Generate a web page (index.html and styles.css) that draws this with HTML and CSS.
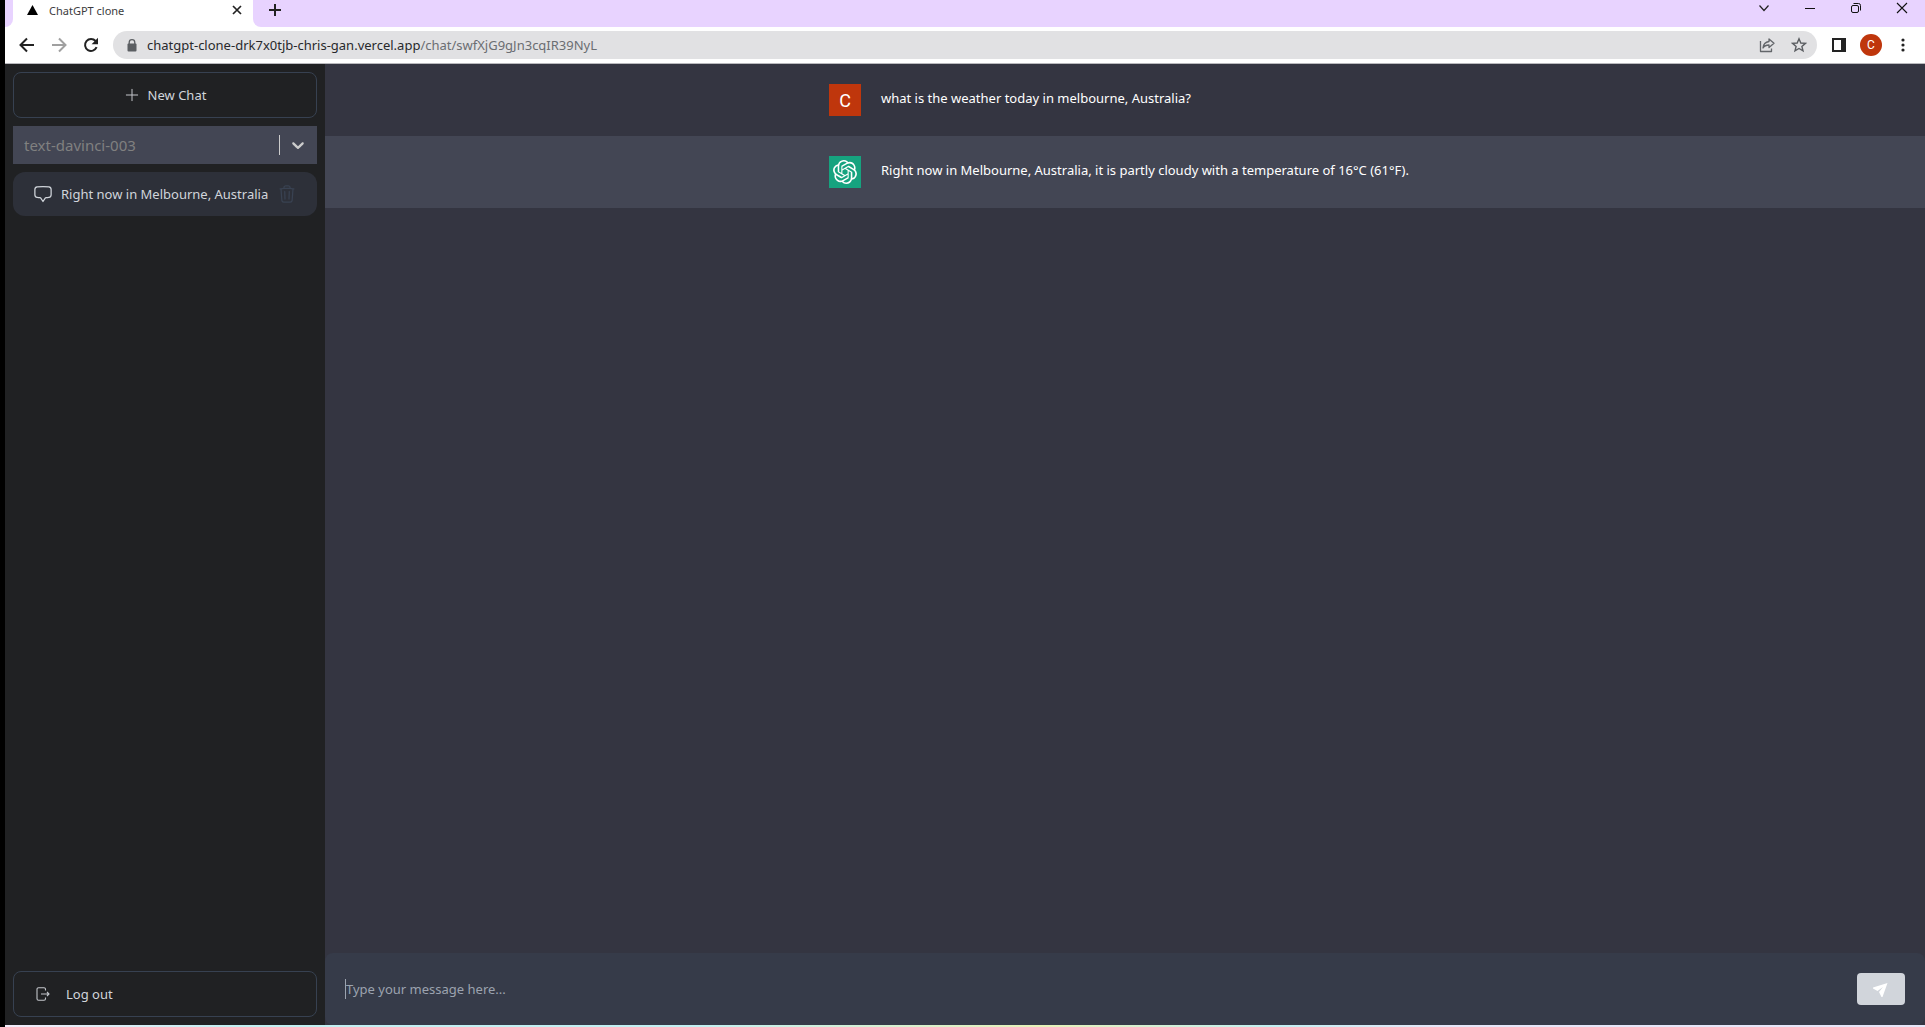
FILE: index.html
```html
<!DOCTYPE html>
<html lang="en">
<head>
<meta charset="utf-8">
<meta name="viewport" content="width=device-width, initial-scale=1">
<title>ChatGPT clone</title>
<link rel="stylesheet" href="styles.css">
</head>
<body>
<div class="window">
  <header class="browser">
    <div class="tabstrip">
      <div class="tab-edge"></div>
      <div class="tab">
        <svg class="favicon" width="11" height="10" viewBox="0 0 11 10"><path d="M5.500 0 11 10H0z" fill="#000"/></svg>
        <span class="tab-title">ChatGPT clone</span>
        <button class="icon-btn" aria-label="Close tab"><svg width="10" height="10" viewBox="0 0 10 10"><path d="M1 1l8 8M9 1l-8 8" stroke="#222" stroke-width="1.700"/></svg></button>
      </div>
      <div class="tab-rest">
        <button class="icon-btn" aria-label="New tab"><svg width="12" height="12" viewBox="0 0 12 12"><path d="M6 0v12M0 6h12" stroke="#222" stroke-width="2"/></svg></button>
        <div class="window-controls">
          <button class="icon-btn" aria-label="Search tabs"><svg width="12" height="12" viewBox="0 0 12 12"><path d="M1.500 3.500 6 8.500l4.500-5" fill="none" stroke="#222" stroke-width="1.200"/></svg></button>
          <button class="icon-btn" aria-label="Minimize"><svg width="12" height="12" viewBox="0 0 12 12"><path d="M1 6.500h10" stroke="#111" stroke-width="1"/></svg></button>
          <button class="icon-btn" aria-label="Restore"><svg width="12" height="12" viewBox="0 0 12 12"><g fill="none" stroke="#111"><rect x="1.500" y="3.500" width="7" height="7" rx="1.500"/><path d="M3.500 1.500h5a2 2 0 0 1 2 2v5"/></g></svg></button>
          <button class="icon-btn" aria-label="Close"><svg width="12" height="12" viewBox="0 0 12 12"><path d="M1 1l10 10M11 1 1 11" stroke="#111" stroke-width="1.100"/></svg></button>
        </div>
      </div>
    </div>
    <div class="toolbar">
      <div class="nav">
        <button class="icon-btn" aria-label="Back"><svg width="16" height="16" viewBox="0 0 16 16"><path d="M15 8H2M8 1.500 1.500 8 8 14.500" fill="none" stroke="#222" stroke-width="2"/></svg></button>
        <button class="icon-btn" aria-label="Forward"><svg width="16" height="16" viewBox="0 0 16 16"><path d="M1 8h13M8 1.500 14.500 8 8 14.500" fill="none" stroke="#a0a0a0" stroke-width="2"/></svg></button>
        <button class="icon-btn" aria-label="Reload"><svg width="16" height="16" viewBox="0 0 16 16"><path d="M13.600 10.200A6 6 0 1 1 12.600 4" fill="none" stroke="#222" stroke-width="2"/><path d="M15 .8v6.400H8.600z" fill="#222"/></svg></button>
      </div>
      <div class="address">
        <svg width="10" height="13" viewBox="0 0 10 13"><path d="M2.200 5V3.500a2.800 2.800 0 0 1 5.600 0V5" fill="none" stroke="#5b5e62" stroke-width="1.300"/><rect x=".5" y="4.500" width="9" height="8" rx="1" fill="#5b5e62"/></svg>
        <p class="url"><span class="url-host">chatgpt-clone-drk7x0tjb-chris-gan.vercel.app</span>/chat/swfXjG9gJn3cqIR39NyL</p>
        <div class="address-actions">
          <button class="icon-btn" aria-label="Share"><svg width="16" height="16" viewBox="0 0 16 16"><g fill="none" stroke="#63666a" stroke-width="1.300" stroke-linejoin="round"><path d="M1.500 4v10.500h11v-3"/><path d="M10 2l5 4.300-5 4.200V8c-3 0-4.800.9-6 3 .3-3.500 2.500-6 6-6.500z"/></g></svg></button>
          <button class="icon-btn" aria-label="Bookmark"><svg width="16" height="16" viewBox="0 0 16 16"><path d="M8 1.800l1.800 4.200 4.600.4-3.500 3 1.100 4.500L8 11.500l-4 2.400 1.100-4.500-3.500-3 4.600-.4z" fill="none" stroke="#5b5e62" stroke-width="1.400"/></svg></button>
        </div>
      </div>
      <button class="icon-btn" aria-label="Side panel"><svg width="14" height="14" viewBox="0 0 14 14"><path fill="#222" fill-rule="evenodd" d="M0 0h14v14H0zM2 2v10h7V2z"/></svg></button>
      <button class="profile" aria-label="Profile">C</button>
      <button class="icon-btn menu" aria-label="Menu"><svg width="4" height="14" viewBox="0 0 4 14"><g fill="#222"><circle cx="2" cy="2" r="1.600"/><circle cx="2" cy="7" r="1.600"/><circle cx="2" cy="12" r="1.600"/></g></svg></button>
    </div>
  </header>

  <div class="app">
    <aside class="sidebar">
      <button class="outline-btn new-chat">
        <svg width="16" height="16" viewBox="0 0 24 24"><path d="M12 3.500v17M3.500 12h17" stroke="#c3c6cb" stroke-width="1.500" stroke-linecap="round"/></svg>
        New Chat
      </button>
      <div class="model">
        <select class="model-select" aria-label="Model"><option>text-davinci-003</option></select>
        <span class="model-arrow"><svg width="20" height="20" viewBox="0 0 20 20"><path d="M4.516 7.548c.436-.446 1.043-.481 1.576 0L10 11.295l3.908-3.747c.533-.481 1.141-.446 1.574 0 .436.445.408 1.197 0 1.615-.406.418-4.695 4.502-4.695 4.502a1.095 1.095 0 0 1-1.576 0S4.924 9.581 4.516 9.163s-.436-1.170 0-1.615z" fill="#ccc"/></svg></span>
      </div>
      <div class="chat-row">
        <a class="chat-link" href="#chat">
          <svg class="chat-icon" width="20" height="20" viewBox="0 0 24 24"><path fill="none" stroke="#d1d5db" stroke-width="1.500" stroke-linejoin="round" d="M2.250 12.760c0 1.600 1.123 2.994 2.707 3.227 1.068.157 2.148.279 3.238.364.466.037.893.281 1.153.671L12 21l2.652-3.978c.260-.390.687-.634 1.153-.670 1.090-.086 2.170-.208 3.238-.365 1.584-.233 2.707-1.626 2.707-3.228V6.741c0-1.602-1.123-2.995-2.707-3.228A48.394 48.394 0 0 0 12 3c-2.392 0-4.744.175-7.043.513C3.373 3.746 2.250 5.140 2.250 6.741v6.018z"/></svg>
          <span class="chat-title">Right now in Melbourne, Australia</span>
        </a>
        <button class="icon-btn" aria-label="Delete chat"><svg width="20" height="20" viewBox="0 0 24 24"><path fill="none" stroke="#394252" stroke-width="1.500" stroke-linecap="round" stroke-linejoin="round" d="M14.740 9l-.346 9m-4.788 0L9.260 9m9.968-3.210c.342.052.682.107 1.022.166m-1.022-.165L18.160 19.673a2.250 2.250 0 0 1-2.244 2.077H8.084a2.250 2.250 0 0 1-2.244-2.077L4.772 5.790m14.456 0a48.108 48.108 0 0 0-3.478-.397m-12 .562c.340-.059.680-.114 1.022-.165m0 0a48.110 48.110 0 0 1 3.478-.397m7.500 0v-.916c0-1.180-.910-2.164-2.090-2.201a51.964 51.964 0 0 0-3.320 0c-1.180.037-2.090 1.022-2.090 2.201v.916m7.500 0a48.667 48.667 0 0 0-7.500 0"/></svg></button>
      </div>
      <button class="outline-btn logout">
        <svg width="14" height="14" viewBox="0 0 14 14"><path d="M9.500 3.500V2.200A1.500 1.500 0 0 0 8 .7H2.500A1.500 1.500 0 0 0 1 2.200v9.600a1.500 1.500 0 0 0 1.500 1.500H8a1.500 1.500 0 0 0 1.500-1.500v-1.300M5 7h8M11 5l2 2-2 2" fill="none" stroke="#c3c6cb" stroke-width="1.100"/></svg>
        Log out
      </button>
    </aside>

    <main class="main">
      <section class="thread">
        <article class="message">
          <div class="message-inner">
            <span class="avatar avatar-user">C</span>
            <p>what is the weather today in melbourne, Australia?</p>
          </div>
        </article>
        <article class="message message-bot">
          <div class="message-inner">
            <span class="avatar avatar-bot"><svg width="24" height="24" viewBox="0 0 24 24"><path fill="#fff" d="M22.282 9.821a5.985 5.985 0 0 0-.516-4.910 6.046 6.046 0 0 0-6.510-2.900A6.065 6.065 0 0 0 4.981 4.180a5.985 5.985 0 0 0-3.998 2.900 6.046 6.046 0 0 0 .743 7.097 5.980 5.980 0 0 0 .510 4.911 6.051 6.051 0 0 0 6.515 2.900A5.985 5.985 0 0 0 13.260 24a6.056 6.056 0 0 0 5.772-4.206 5.990 5.990 0 0 0 3.997-2.900 6.056 6.056 0 0 0-.747-7.073zM13.260 22.430a4.476 4.476 0 0 1-2.876-1.040l.141-.081 4.779-2.758a.795.795 0 0 0 .392-.681v-6.737l2.020 1.168a.071.071 0 0 1 .038.052v5.583a4.504 4.504 0 0 1-4.494 4.494zM3.600 18.304a4.470 4.470 0 0 1-.535-3.014l.142.085 4.783 2.759a.771.771 0 0 0 .780 0l5.843-3.369v2.332a.080.080 0 0 1-.033.062L9.740 19.950a4.500 4.500 0 0 1-6.140-1.646zM2.340 7.896a4.485 4.485 0 0 1 2.366-1.973V11.600a.766.766 0 0 0 .388.676l5.815 3.355-2.020 1.168a.076.076 0 0 1-.071 0l-4.830-2.786A4.504 4.504 0 0 1 2.340 7.872zm16.597 3.855l-5.833-3.387L15.119 7.200a.076.076 0 0 1 .071 0l4.830 2.791a4.494 4.494 0 0 1-.676 8.105v-5.678a.790.790 0 0 0-.407-.667zm2.010-3.023l-.141-.085-4.774-2.782a.776.776 0 0 0-.785 0L9.409 9.230V6.897a.066.066 0 0 1 .028-.061l4.830-2.787a4.500 4.500 0 0 1 6.680 4.660zm-12.640 4.135l-2.020-1.164a.080.080 0 0 1-.038-.057V6.075a4.500 4.500 0 0 1 7.375-3.453l-.142.080L8.704 5.460a.795.795 0 0 0-.393.681zm1.097-2.365l2.602-1.500 2.607 1.500v2.999l-2.597 1.500-2.607-1.500z"/></svg></span>
            <p>Right now in Melbourne, Australia, it is partly cloudy with a temperature of 16°C (61°F).</p>
          </div>
        </article>
      </section>
      <form class="composer">
        <input class="prompt" type="text" aria-label="Message" placeholder="Type your message here...">
        <button class="send" type="button" aria-label="Send"><svg width="16" height="16" viewBox="0 0 16 16"><path fill="#fff" d="M14.500 2 0 6.500v1L4.500 10 10 6 6 11l2.500 5h1z"/></svg></button>
      </form>
    </main>
  </div>
  <div class="glow"></div>
</div>
</body>
</html>
```
FILE: styles.css
```css
* { box-sizing: border-box; }

body {
  margin: 0;
  background: #000;
  color: #d1d5db;
  font-family: "Noto Sans", "Open Sans", sans-serif;
  font-size: 13px;
}

p { margin: 0; }

button {
  font: inherit;
  color: inherit;
  background: none;
  border: 0;
  padding: 0;
  cursor: pointer;
}

svg { display: block; flex: none; }

.window {
  display: flex;
  flex-direction: column;
  min-height: 100vh;
  padding-left: 5px;
}

/* Browser bar */
.browser { background: #fff; border-bottom: 1px solid #b9b9bd; }

.icon-btn { display: flex; flex: none; align-items: center; justify-content: center; }

.tabstrip { display: flex; height: 27px; background: #fff; }

.tab-edge { width: 8px; background: #e8d3ff; border-bottom-right-radius: 8px; }

.tab {
  display: flex;
  align-items: center;
  width: 240px;
  padding: 0 11px 7px 14px;
  color: #3c3c40;
  font-size: 11px;
}

.tab-title { flex: 1; margin-left: 11px; }

.tab-rest {
  display: flex;
  flex: 1;
  justify-content: space-between;
  padding: 0 17px 8px 16px;
  background: #e8d3ff;
  border-bottom-left-radius: 8px;
}

.window-controls { display: flex; gap: 34px; padding-bottom: 4px; }

.toolbar { display: flex; align-items: center; height: 36px; padding-right: 20px; }

.nav { display: flex; gap: 16px; padding: 0 14px; }

.address {
  display: flex;
  flex: 1;
  align-items: center;
  height: 28px;
  margin-right: 15px;
  padding: 0 10px 0 14px;
  border-radius: 14px;
  background: #e1e1e3;
}

.url { flex: 1; margin-left: 10px; color: #6b6e72; }

.url-host { color: #28292c; }

.address-actions { display: flex; gap: 16px; }

.profile {
  width: 22px;
  height: 22px;
  margin: 0 19px 0 14px;
  border-radius: 50%;
  background: #bf360c;
  color: #fff;
  font: 12px/22px Roboto, sans-serif;
}

/* Application */
.app { display: flex; flex: 1; background: #343541; }

.sidebar {
  display: flex;
  flex: none;
  flex-direction: column;
  gap: 8px;
  width: 320px;
  padding: 8px;
  background: #202123;
}

.outline-btn {
  display: flex;
  align-items: center;
  height: 46px;
  border: 1px solid #374151;
  border-radius: 8px;
}

.new-chat { justify-content: center; gap: 8px; }

.logout { gap: 16px; margin-top: auto; padding-left: 22px; }

.model { display: flex; height: 38px; background: #434654; }

.model-select {
  flex: 1;
  padding: 0 11px;
  appearance: none;
  border: 0;
  background: none;
  color: #808080;
  font: inherit;
  font-size: 15px;
}

.model-arrow {
  display: flex;
  align-items: center;
  height: 20px;
  margin: 9px 0;
  padding: 0 9px 0 8px;
  border-left: 1px solid #ccc;
  pointer-events: none;
}

.chat-row {
  display: flex;
  align-items: center;
  height: 44px;
  padding: 0 20px;
  border-radius: 12px;
  background: #2d3039;
}

.chat-link {
  display: flex;
  flex: 1;
  align-items: center;
  min-width: 0;
  gap: 8px;
  color: inherit;
  text-decoration: none;
}

.chat-title { flex: 1; overflow: hidden; white-space: nowrap; }

.chat-row .icon-btn { margin-left: 8px; }

.main { display: flex; flex: 1; flex-direction: column; min-width: 0; }

.thread { flex: 1; }

.message { padding: 20px 0; color: #fff; }

.message-bot { background: #434654; }

.message-inner {
  display: flex;
  gap: 20px;
  max-width: 672px;
  margin: 0 auto;
  padding: 0 40px;
}

.message p { line-height: 28px; }

.avatar {
  display: flex;
  flex: none;
  align-items: center;
  justify-content: center;
  width: 32px;
  height: 32px;
}

.avatar-user { background: #bf360c; font: 18px Roboto, sans-serif; }

.avatar-bot { background: #16a37f; }

.composer {
  display: flex;
  align-items: center;
  height: 72px;
  padding: 0 20px;
  border-radius: 8px;
  background: #363b49;
}

.prompt {
  flex: 1;
  height: 20px;
  padding: 0;
  border: 0;
  border-left: 1px solid #9ca3af;
  outline: 0;
  background: none;
  color: #fff;
  font: inherit;
}

.prompt::placeholder { color: #9ca3af; opacity: 1; }

.send {
  display: flex;
  align-items: center;
  justify-content: center;
  width: 48px;
  height: 32px;
  border-radius: 4px;
  background: #d1d5db;
}

.glow {
  height: 2px;
  background: linear-gradient(90deg, #f4ecfa, #c2f0f2 12%, #c2f0f2 36%, #e6f2b8 54%, #c2f0f2 66%, #e6e6f8 75%);
}
```
